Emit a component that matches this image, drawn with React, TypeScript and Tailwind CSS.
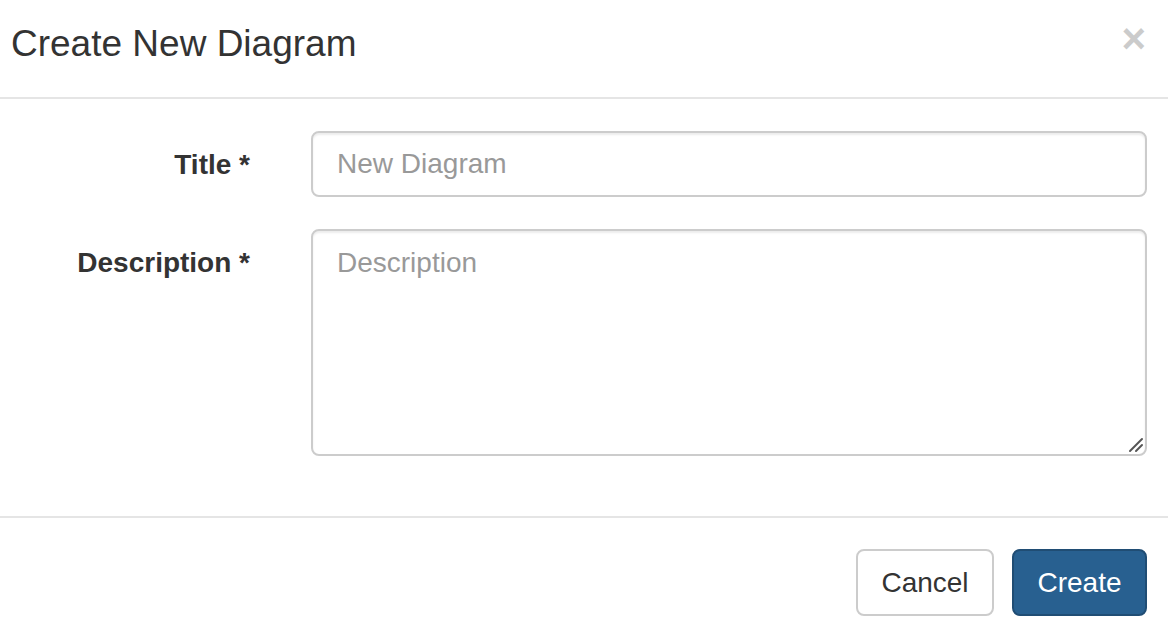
import React from "react";

export default function App() {
  return (
    <div
      className="w-[1168px] h-[632px] bg-white text-[#333] overflow-hidden"
      style={{ fontFamily: '"Liberation Sans", Arial, Helvetica, sans-serif' }}
    >
      {/* Header */}
      <div className="h-[99px] border-b-2 border-[#e5e5e5] flex justify-between pl-[11px] pr-[22px]">
        <h4 className="pt-[18px] text-[37px] leading-[51px] font-normal text-[#333]">
          Create New Diagram
        </h4>
        <button
          type="button"
          className="self-start mt-[18px] text-[42px] leading-none font-bold text-black opacity-20"
        >
          ×
        </button>
      </div>

      {/* Body */}
      <div className="pt-[32px] pr-[21px] flex flex-col gap-[32px]">
        <div className="flex gap-[61px]">
          <label className="w-[250px] shrink-0 text-right pt-[14px] text-[28px] leading-[40px] font-bold text-[#333]">
            Title *
          </label>
          <input
            type="text"
            placeholder="New Diagram"
            className="flex-1 h-[66px] border-2 border-[#ccc] rounded-[8px] px-[24px] text-[28px] leading-[40px] text-[#555] placeholder:text-[#999] shadow-[inset_0_2px_2px_rgba(0,0,0,0.075)] outline-none"
          />
        </div>
        <div className="flex gap-[61px]">
          <label className="w-[250px] shrink-0 text-right pt-[14px] text-[28px] leading-[40px] font-bold text-[#333]">
            Description *
          </label>
          <div className="relative flex-1 flex">
            <textarea
              placeholder="Description"
              className="flex-1 h-[227px] resize-none border-2 border-[#ccc] rounded-[8px] px-[24px] py-[12px] text-[28px] leading-[40px] text-[#555] placeholder:text-[#999] shadow-[inset_0_2px_2px_rgba(0,0,0,0.075)] outline-none"
            />
            <svg
              className="absolute right-[3px] bottom-[3px] pointer-events-none"
              width="16"
              height="16"
              viewBox="0 0 16 16"
            >
              <line x1="2" y1="14" x2="14" y2="2" stroke="#555" strokeWidth="2" strokeLinecap="round" />
              <line x1="8" y1="14" x2="14" y2="8" stroke="#555" strokeWidth="2" strokeLinecap="round" />
            </svg>
          </div>
        </div>
      </div>

      {/* Footer */}
      <div className="mt-[60px] border-t-2 border-[#e5e5e5] pt-[31px] pr-[21px] flex justify-end gap-[18px]">
        <button
          type="button"
          className="w-[138px] h-[67px] border-2 border-[#ccc] rounded-[8px] bg-white text-[28px] leading-[40px] text-[#333] text-center"
        >
          Cancel
        </button>
        <button
          type="button"
          className="w-[135px] h-[67px] border-2 border-[#204d74] rounded-[8px] bg-[#286090] text-[28px] leading-[40px] text-white text-center"
        >
          Create
        </button>
      </div>
    </div>
  );
}
